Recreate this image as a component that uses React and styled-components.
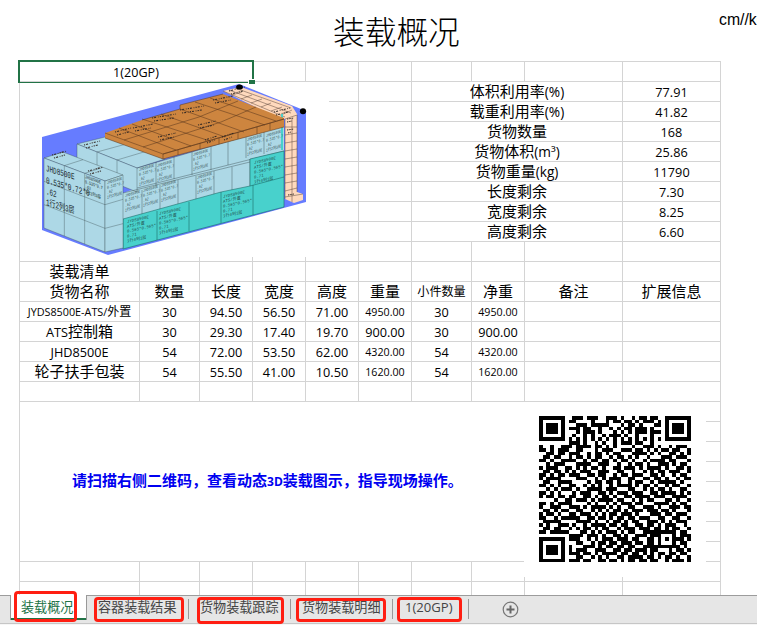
import React from "react";
import styled, { createGlobalStyle } from "styled-components";

const GlobalStyle = createGlobalStyle`
  * { box-sizing: border-box; }
  html, body { margin: 0; background: #fff; overflow: hidden; }
`;

const LINE = "#d4d4d4";
const GREEN = "#217346";

const Window = styled.div`
  width: 757px;
  height: 625px;
  display: flex;
  flex-direction: column;
  overflow: hidden;
  background: #fff;
  color: #000;
  font-family: "Open Sans", "Noto Sans CJK SC", sans-serif;
`;

const Heading = styled.header`
  height: 61px;
  flex: none;
  display: grid;
  grid-template-columns: 334px 385px 1fr;
`;

const Title = styled.h1`
  grid-column: 2;
  margin: 7px 0 0 -1px;
  font: 300 31.7px/46px "Noto Sans CJK SC", sans-serif;
`;

const Unit = styled.span`
  font: 15.8px/20px "Liberation Sans", sans-serif;
  margin-top: 10px;
  white-space: nowrap;
`;

const Sheet = styled.main`
  position: relative;
  width: 702px;
  height: 534px;
  margin-left: 19px;
  flex: none;
  overflow: visible;
  display: grid;
  grid-template-columns: 120px 60px 53px 53px 53px 53px 60px 53px 98px 98px;
  grid-auto-rows: 20px;
  align-content: start;
  border-left: 1px solid ${LINE};
  border-top: 1px solid ${LINE};
`;

const Cell = styled.div`
  grid-column: span ${(p) => p.$cols || 1};
  grid-row: span ${(p) => p.$rows || 1};
  min-width: 0;
  border-right: 1px solid ${LINE};
  border-bottom: ${(p) => (p.$open ? "0" : `1px solid ${LINE}`)};
  height: ${(p) => (p.$open ? "13px" : "auto")};
  display: flex;
  align-items: center;
  justify-content: center;
  white-space: nowrap;
  font-size: ${(p) => p.$size || 15}px;
  line-height: 19px;
`;

const Latin = styled.span`
  font-size: ${(p) => p.$size || 12.7}px;
`;

const ActiveCell = styled.div`
  position: absolute;
  left: -2px;
  top: -2px;
  width: 236px;
  height: 23px;
  border: 2px solid ${GREEN};
  border-bottom-width: 1px;
  &::after {
    content: "";
    position: absolute;
    right: -3px;
    bottom: -2px;
    width: 6px;
    height: 4px;
    background: ${GREEN};
    border-left: 1px solid #fff;
    border-top: 1px solid #fff;
  }
`;

const Picture = styled.div`
  position: absolute;
  left: ${(p) => p.$x}px;
  top: ${(p) => p.$y}px;
  width: ${(p) => p.$w}px;
  height: ${(p) => p.$h}px;
  background: #fff;
  svg { display: block; }
`;

const Notice = styled.p`
  margin: -2px 0 0;
  width: 100%;
  padding-left: 52px;
  color: #0000f0;
  font-size: 15px;
  font-weight: 700;
`;

const TabBar = styled.nav`
  height: 30px;
  flex: none;
  display: flex;
  background: #e6e6e6;
  border-top: 1px solid #9c9c9c;
  position: relative;
  &::after {
    content: "";
    position: absolute;
    left: 0;
    right: 0;
    top: 27px;
    height: 2px;
    background: #f6f6f6;
    border-top: 1px solid #c6c6c6;
  }
`;

const Tab = styled.div`
  position: relative;
  width: ${(p) => p.$w}px;
  height: ${(p) => (p.$active ? 25 : 24)}px;
  margin-top: ${(p) => (p.$active ? -1 : 0)}px;
  padding-left: ${(p) => p.$pad}px;
  font-size: 13.1px;
  line-height: ${(p) => (p.$active ? 25 : 23)}px;
  white-space: nowrap;
  color: ${(p) => (p.$active ? GREEN : "#444")};
  background: ${(p) => (p.$active ? "#fff" : "transparent")};
  border: 0 solid #999;
  border-width: ${(p) => (p.$active ? "0 1px 0 1px" : "0")};
  box-shadow: ${(p) => (p.$active ? `inset 0 -2px ${GREEN}` : "none")};
  &::after {
    content: "";
    display: ${(p) => (p.$active ? "none" : "block")};
    position: absolute;
    right: 0;
    top: 3px;
    width: 1px;
    height: 20px;
    background: #999;
  }
`;

const TabLead = styled.div`
  width: 10px;
`;

const Highlight = styled.span`
  position: absolute;
  z-index: 1;
  left: ${(p) => p.$x}px;
  top: ${(p) => p.$y}px;
  width: ${(p) => p.$w}px;
  height: ${(p) => p.$h}px;
  border: 3px solid #ff1e12;
  border-radius: 4px;
`;

const AddSheet = styled.button`
  border: 0;
  padding: 0;
  margin: 5px 0 0 33px;
  width: 17px;
  height: 17px;
  background: none;
  svg { display: block; }
`;

const summary = [
  ["体积利用率(%)", "77.91"],
  ["载重利用率(%)", "41.82"],
  ["货物数量", "168"],
  ["货物体积(m³)", "25.86"],
  ["货物重量(kg)", "11790"],
  ["长度剩余", "7.30"],
  ["宽度剩余", "8.25"],
  ["高度剩余", "6.60"],
];

const headers = ["货物名称", "数量", "长度", "宽度", "高度", "重量", "小件数量", "净重", "备注", "扩展信息"];

const items = [
  ["JYDS8500E-ATS/外置", "30", "94.50", "56.50", "71.00", "4950.00", "30", "4950.00", "", ""],
  ["ATS控制箱", "30", "29.30", "17.40", "19.70", "900.00", "30", "900.00", "", ""],
  ["JHD8500E", "54", "72.00", "53.50", "62.00", "4320.00", "54", "4320.00", "", ""],
  ["轮子扶手包装", "54", "55.50", "41.00", "10.50", "1620.00", "54", "1620.00", "", ""],
];

const tabs = [
  { name: "装载概况", w: 77, pad: 10, active: true, mark: [3, -4, 63, 31] },
  { name: "容器装载结果", w: 102, pad: 11, mark: [7, 1, 90, 25] },
  { name: "货物装载跟踪", w: 102, pad: 11, mark: [8, 1, 87, 27] },
  { name: "货物装载明细", w: 102, pad: 11, mark: [5, 2, 90, 24] },
  { name: "1(20GP)", w: 76, pad: 12, mark: [4, 1, 65, 25] },
];

function Mixed({ text, size }) {
  return (
    <span>
      {text.split(/([\x20-\x7e³]+)/).map((part, i) =>
        i % 2 ? <Latin key={i} $size={size}>{part}</Latin> : part
      )}
    </span>
  );
}

function Blanks({ count, ...rest }) {
  return Array.from({ length: count }, (_, i) => <Cell key={i} {...rest} />);
}

const pt = (a, b, t) => [a[0] + (b[0] - a[0]) * t, a[1] + (b[1] - a[1]) * t];

// One flat face subdivided into carton outlines.
function Face({ a, b, c, d, cols, rows, fill }) {
  let path = "";
  for (let i = 0; i <= cols; i++) path += `M${pt(a, b, i / cols)}L${pt(d, c, i / cols)}`;
  for (let i = 0; i <= rows; i++) path += `M${pt(a, d, i / rows)}L${pt(b, c, i / rows)}`;
  return (
    <g>
      <polygon points={[a, b, c, d].join(" ")} fill={fill} />
      <path d={path} fill="none" stroke="#36474a" strokeOpacity=".6" strokeWidth=".6" />
    </g>
  );
}

function CartonLabel({ x, y, kind }) {
  const teal = kind === "teal";
  const lines = teal
    ? ["JYDS8500E", "ATS/外置", "0.565*0.565*", "0.71", "1行4列1层"]
    : ["JHD8500E", "0.535*0.7", ".62", "1行2列3层"];
  return (
    <g transform={`matrix(${teal ? 0.92 : 0.72} -.2 0 1 ${x} ${y})`} fontSize="4.4" fill="#18302e" fillOpacity=".85">
      {lines.map((l, i) => <text key={i} y={i * 4.9}>{l}</text>)}
    </g>
  );
}

const lightLabels = [[139, 171], [157, 167], [125, 197], [143, 192], [161, 187], [193, 156], [197, 179], [247, 141], [266, 137]];
const tealLabels = [[127, 223], [159, 215], [223, 198], [254, 164]];
const speckles = [[115, 132, 16], [133, 128, 20], [152, 118, 24], [180, 110, 24], [213, 100, 20], [158, 137, 18], [198, 125, 18], [205, 140, 12], [222, 137, 12], [52, 155, 15], [84, 145, 16], [88, 171, 15], [229, 91, 16], [274, 112, 16]];

function LoadingView() {
  const blue = "#add8e6";
  return (
    <svg width="309" height="175" viewBox="20 82 309 175" fontFamily='"Liberation Mono", "Noto Sans CJK SC", monospace'>
      <polygon points="42,137 239,84 306,111 306,202 108,255 42,230" fill="#667cff" />
      <polygon points="223,91 241,87 292,106 297,114 297,192 303,194 303,200 294,203 285,199 285,119 270,114" fill="#ffd9bd" />
      <path d="M223 91L285 117M229 90L291 113M235 88L291 108M232 95L242 92M241 99L252 95M251 103L262 99M261 107L271 103M271 111L282 107M281 115L292 110M285 119L297 115M285 127H297M285 135L297 133M285 143L297 141M285 151L297 149M285 159L297 157M285 167L297 165M285 175L297 173M285 183L297 181M285 191L297 188M285 197L303 194M292 119V202M285 119V199M297 115V192" fill="none" stroke="#4b382e" strokeOpacity=".65" strokeWidth=".7" />
      <path d="M287 119l7 -1M287 122l5 -1M287 130l7 -1M288 133l3 -1M288 195l6 -1" stroke="#352b26" strokeDasharray="1.4 .9" />
      <polygon points="137,168 284,125 284,190 123,230 123,193 137,188" fill={blue} />
      <Face a={[77, 144]} b={[105, 137]} c={[165, 159]} d={[137, 168]} cols={1} rows={3} fill={blue} />
      <Face a={[77, 144]} b={[137, 168]} c={[137, 192]} d={[77, 168]} cols={3} rows={1} fill={blue} />
      <path d="M137 168L284 125M137 188L284 151M123 193L250 162M156 162V186M174 156V179M192 152V175M211 147V170M228 142V165M246 136V158M264 131V154M142 190V214M160 185V210M178 180V205M196 176V200M214 171V196M232 167V190M250 159V186" fill="none" stroke="#37484d" strokeOpacity=".7" strokeWidth=".6" />
      <polygon points="123,219 221,192 250,186 250,159 284,151 284,207 123,249" fill="#48d1cc" />
      <path d="M123 219L221 192L250 186V159L284 151V207L123 249ZM157 211V240M189 202V231M221 192V223M253 185V215M250 186L284 177" fill="none" stroke="#155e5b" strokeOpacity=".75" strokeWidth=".7" />
      <path d="M282 114V150" stroke="#48d1cc" strokeWidth="2" />
      <polygon points="105,133 142,120 180,109 180,105 223,94 284,118 284,127 163,159 105,138" fill="#cd853f" />
      <path d="M105 133L163 154L284 119M163 154V159M119 128L176 150M132 124L191 146M142 119L210 141M161 114L225 137M180 109L244 132M195 102L265 125M210 98L276 121M124 140L199 117L238 101M143 147L221 122L256 107M163 154L284 119M105 138L163 159L284 127M178 150V155M200 143V149M219 138V144M238 132V139M257 127V134M270 123V130M142 120L180 109V105L223 94" fill="none" stroke="#59351c" strokeOpacity=".75" strokeWidth=".7" />
      <Face a={[44, 158]} b={[63, 152]} c={[123, 175]} d={[105, 181]} cols={1} rows={3} fill={blue} />
      <Face a={[44, 158]} b={[105, 181]} c={[105, 252]} d={[44, 228]} cols={3} rows={3} fill={blue} />
      <Face a={[105, 181]} b={[123, 175]} c={[123, 248]} d={[105, 252]} cols={1} rows={3} fill={blue} />
      <g transform="matrix(.72 .26 0 1 85 178)" fontSize="4.6" fill="#18302e">
        <text>JHD8500E</text>
        <text y="5">0.535*0.7</text>
        <text y="10">.62</text>
        <text y="15">1行3列3层</text>
      </g>
      {lightLabels.map(([x, y]) => <CartonLabel key={`${x}-${y}`} x={x} y={y} />)}
      <CartonLabel x={107} y={184} />
      {tealLabels.map(([x, y]) => <CartonLabel key={`${x}-${y}`} x={x} y={y} kind="teal" />)}
      {speckles.map(([x, y, w]) => (
        <path key={`${x}-${y}`} d={`M${x} ${y}l${w} -4M${x + 2} ${y + 3}l${w - 4} -3`} stroke="#352b26" strokeWidth="1.1" strokeDasharray="1.2 1 2 1.7 .7 1.3" />
      ))}
      <g transform="matrix(.66 .2 0 1 46 171)" fontSize="9" fill="#17262b">
        <text>JHD8500E</text>
        <text y="12" fontSize="9.2">0.535*0.72*0</text>
        <text y="23">.62</text>
        <text y="34">1行2列3层</text>
      </g>
      <ellipse cx="239.5" cy="87" rx="3.4" ry="2.6" />
      <ellipse cx="303" cy="111.3" rx="3.1" ry="3" />
    </svg>
  );
}

const modules = [
  "11111110011101110011101001011011001111111",
  "10000010110000100010110110101110101000001",
  "10111010001110111110001011010001101011101",
  "10111010111011001001010110111010001011101",
  "10111010001011101000101010111011101011101",
  "10000010010010100101110100100010001000001",
  "11111110101010101010101010101010101111111",
  "00000000111010010100101110110010000000000",
  "10010011101111011010100001001110100101110",
  "11010111001100010111001110110101011011001",
  "00110110111001011010110001111010100110101",
  "01101100101101011001011010100100011101110",
  "11010011110010110110101101001011110110001",
  "00101110001111001110010010110100111010110",
  "10111001101010110100110111010111101001101",
  "01101101010111001110011001001010110111001",
  "11010110111001101100101101110011010010110",
  "10111100001110010101110011001101101001011",
  "01100111100001011011010010110010111110100",
  "11010100110010101001011110101101001011001",
  "00101011101001111011100011001010110100110",
  "11010100010111001101011101110011011110101",
  "10110110110011010110100110111101110011110",
  "00001001101110101111011001010110001101001",
  "11010111100001010010101110110001111010110",
  "10011100111010111101010011001110100111011",
  "01101011001100101010110101110111011010001",
  "10110100110111010101101110100011101101110",
  "11001011111001101101011011011100110011001",
  "01111100001111010010110101100111010101110",
  "10100111010010111101101100110110101110010",
  "01101100101011010110010111011101101011001",
  "11011111000110101011101011001111111110110",
  "00000000111101110100110100111011100010111",
  "11111110111001010111011101100110101011101",
  "10000010001100101101101110110110100010110",
  "10111010100011101011011011001111111111010",
  "10111010101110011100110110111011000101101",
  "10111010111011010111101101101010110110110",
  "10000010001100101010011011110110101101001",
  "11111110111011001101101011011011001011101",
];

function QrCode() {
  const d = modules
    .map((row, y) => [...row].map((bit, x) => (bit === "1" ? `M${x} ${y}h1v1h-1z` : "")).join(""))
    .join("");
  return (
    <svg width="182" height="175" viewBox="524 402 182 175" shapeRendering="crispEdges">
      <path d={d} transform="translate(539 416) scale(3.707 3.573)" />
    </svg>
  );
}

export default function App() {
  return (
    <Window>
      <GlobalStyle />
      <Heading>
        <Title>装载概况</Title>
        <Unit>cm//kg</Unit>
      </Heading>

      <Sheet>
        <Cell $cols={3}><Mixed text="1(20GP)" size={12.6} /></Cell>
        <Blanks count={7} />

        {summary.map(([label, value]) => (
          <React.Fragment key={label}>
            <Cell $cols={5} />
            <Cell />
            <Cell $cols={3}><Mixed text={label} size={13.7} /></Cell>
            <Cell><Mixed text={value} /></Cell>
          </React.Fragment>
        ))}

        <Blanks count={10} />
        <Cell>装载清单</Cell>
        <Blanks count={9} />
        {headers.map((h) => (
          <Cell key={h} $size={h === "小件数量" ? 12.1 : 15}>{h}</Cell>
        ))}
        {items.map((row) =>
          row.map((value, i) => (
            <Cell key={`${row[0]}-${i}`} $size={value.length > 12 ? 12 : 15}>
              <Mixed text={value} size={value.length > 12 ? 10.8 : value.length === 7 ? 10.7 : undefined} />
            </Cell>
          ))
        )}
        <Blanks count={10} />

        <Cell $cols={8} $rows={8}>
          <Notice><Mixed text="请扫描右侧二维码，查看动态3D装载图示，指导现场操作。" size={12} /></Notice>
        </Cell>
        <Blanks count={16} />
        <Blanks count={10} />
        <Blanks count={10} $open />

        <Picture $x={0} $y={20} $w={309} $h={175}><LoadingView /></Picture>
        <Picture $x={504} $y={340} $w={182} $h={175}><QrCode /></Picture>
        <ActiveCell />
      </Sheet>

      <TabBar>
        <TabLead />
        {tabs.map((t) => (
          <Tab key={t.name} $w={t.w} $pad={t.pad} $active={t.active}>
            {t.name}
            <Highlight $x={t.mark[0]} $y={t.mark[1]} $w={t.mark[2]} $h={t.mark[3]} />
          </Tab>
        ))}
        <AddSheet aria-label="新工作表">
          <svg width="17" height="17" viewBox="0 0 17 17" fill="none" stroke="#777">
            <circle cx="8.5" cy="8.5" r="7.3" strokeWidth="1.2" />
            <path d="M4.5 8.5h8M8.5 4.5v8" strokeWidth="2" stroke="#666" />
          </svg>
        </AddSheet>
      </TabBar>
    </Window>
  );
}
